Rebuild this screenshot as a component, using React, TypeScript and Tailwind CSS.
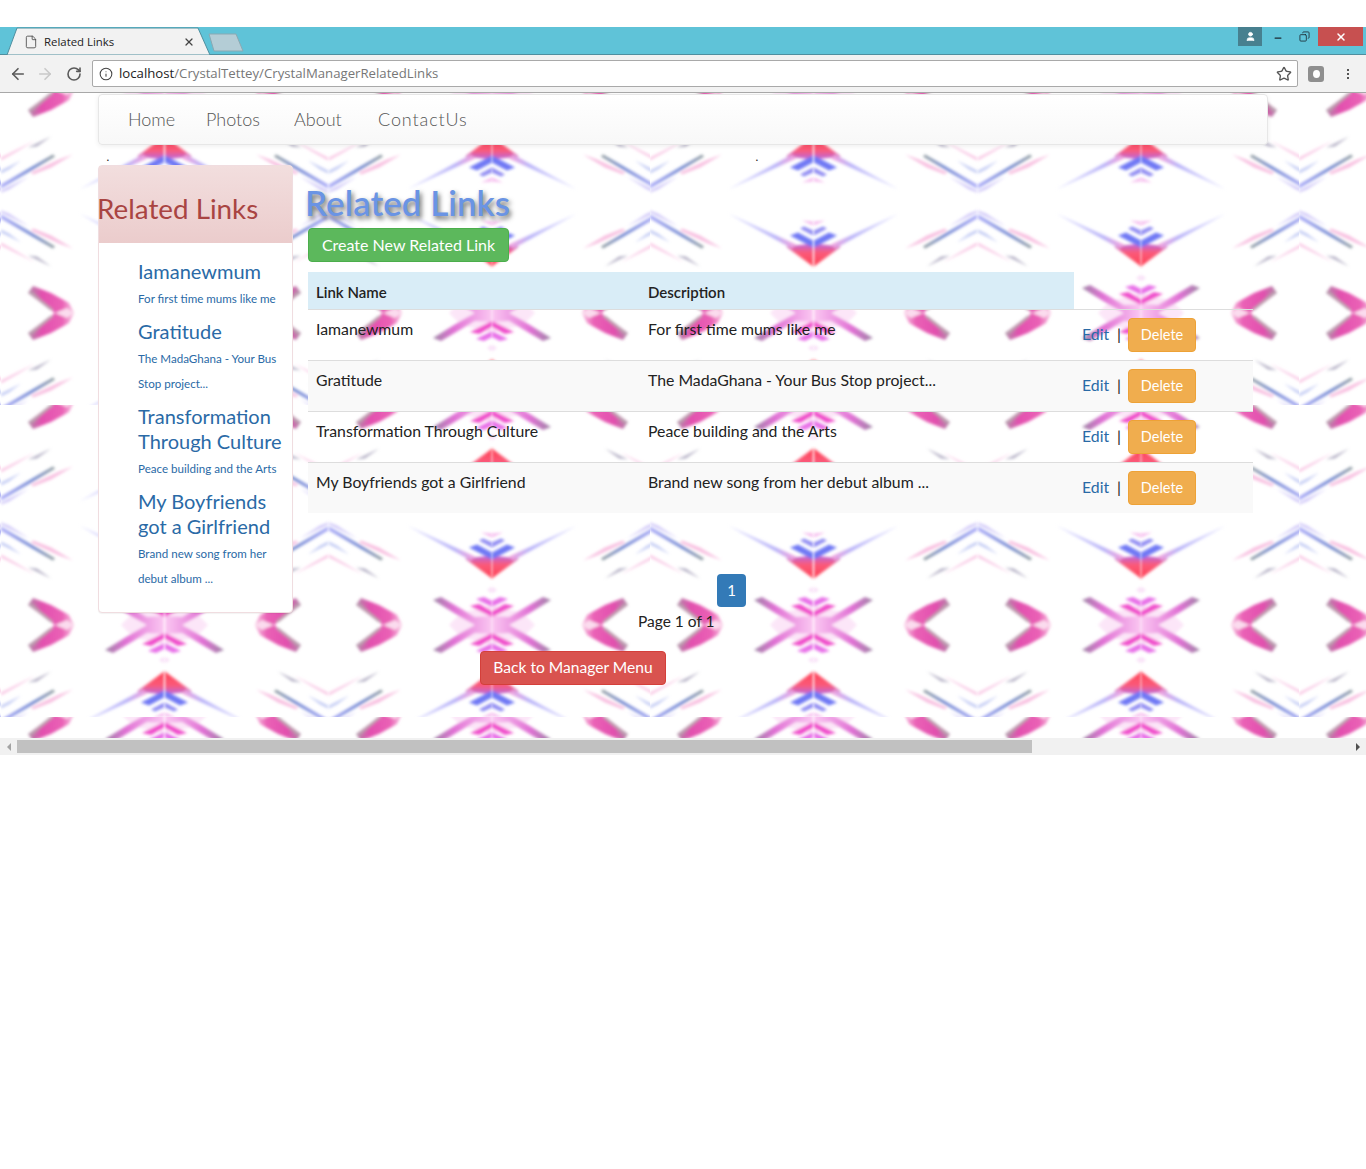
import React from "react";
import { ArrowLeft, ArrowRight, RotateCw, Info, Star, File, X, User, Minus, Copy } from "lucide-react";

const hand = "font-['Lato','Open_Sans',sans-serif] font-light";

function Background() {
  return (
    <svg className="absolute inset-0 h-full w-full" aria-hidden="true">
      <defs>
        <filter id="soft" filterUnits="userSpaceOnUse" x="-20" y="-400" width="420" height="800">
          <feGaussianBlur stdDeviation="1.5" />
        </filter>
        <linearGradient id="armX" x1="0" y1="0" x2="1" y2="0">
          <stop offset="0" stopColor="#9f86a6" />
          <stop offset="0.35" stopColor="#e070d4" />
          <stop offset="1" stopColor="#fbc8f2" />
        </linearGradient>
        <linearGradient id="blueStreak" x1="0" y1="0" x2="1" y2="0">
          <stop offset="0" stopColor="#a9a9f8" />
          <stop offset="0.6" stopColor="#6f86d0" />
          <stop offset="1" stopColor="#8f9a9c" />
        </linearGradient>
        <linearGradient id="line" x1="0" y1="0" x2="1" y2="0">
          <stop offset="0" stopColor="#d8d8ff" />
          <stop offset="0.7" stopColor="#b8b2f8" />
          <stop offset="1" stopColor="#f4a0dc" />
        </linearGradient>
        <linearGradient id="red" x1="0" y1="0" x2="0" y2="1">
          <stop offset="0" stopColor="#ff4256" />
          <stop offset="0.6" stopColor="#fb5a78" />
          <stop offset="1" stopColor="#b868e0" />
        </linearGradient>
        <linearGradient id="bulge" x1="0" y1="0" x2="1" y2="0">
          <stop offset="0" stopColor="#b08ca8" />
          <stop offset="0.3" stopColor="#e24fae" />
          <stop offset="0.75" stopColor="#ea62b6" />
          <stop offset="1" stopColor="#f8c4e2" />
        </linearGradient>
        <g id="streakUp">
          <polygon points="0,-44 34,-61 16,-50 0,-41" fill="#f9c6e4" />
          <polygon points="27,-54 50,-65 36,-55" fill="#b8b4c8" />
          <polygon points="30,-29 58,-42 72,-47 50,-34 32,-27" fill="#f8bfe0" />
          <polygon points="0,-17 52,-47 54,-45 0,-13" fill="url(#blueStreak)" />
          <polygon points="0,-11 28,-25 8,-12 0,-9" fill="#cfc6f8" />
          <polygon points="0,-31 20,-41 8,-32 0,-28" fill="#c2cbf4" />
        </g>
        <g id="diamondUp">
          <polygon points="163,-65 136,-45 163,-42" fill="url(#red)" />
          <polygon points="142,-47 78,-12 146,-43" fill="url(#line)" />
          <polygon points="163,-46 140,-34 148,-31 163,-39" fill="#6f78f4" />
          <polygon points="163,-34 150,-27 154,-25 163,-29" fill="#8f8af2" />
          <polygon points="163,-24 152,-19 163,-20" fill="#f6bcee" />
        </g>
        <g id="streaks">
          <use href="#streakUp" />
          <use href="#streakUp" transform="scale(1,-1)" />
        </g>
        <g id="diamond">
          <use href="#diamondUp" />
          <use href="#diamondUp" transform="scale(1,-1)" />
        </g>
        <g id="arrowUp">
          <polygon points="32,-27 50,-20 68,-10 73,0 54,0 27,-20" fill="url(#bulge)" />
          <polygon points="27,-21 31,-21 53,-3 49,-3" fill="#b9a2ae" />
          <polygon points="54,0 66,-5 73,0" fill="#fbdcee" />
        </g>
        <g id="xUp">
          <polygon points="163,-20 132,-12 120,0 163,0" fill="#fce6f8" />
          <polygon points="163,-9 146,-8 112,-28 104,-25 130,-9 146,0 163,0" fill="url(#armX)" />
          <polygon points="163,-8 141,-19 150,-21 163,-14" fill="#f04fcc" />
          <polygon points="163,-18 147,-26 155,-28 163,-24" fill="#e870e8" />
          <polygon points="163,-32 158,-35 163,-38" fill="#f8dcf6" />
        </g>
        <g id="rowCell">
          <use href="#arrowUp" />
          <use href="#arrowUp" transform="scale(1,-1)" />
          <use href="#xUp" />
          <use href="#xUp" transform="scale(1,-1)" />
        </g>
        <g id="half" filter="url(#soft)">
          <use href="#rowCell" y="-3" />
          <use href="#rowCell" y="220" />
          <use href="#diamond" y="108.5" />
          <use href="#diamond" y="331.5" />
          <use href="#streaks" y="108.5" />
          <use href="#streaks" y="331.5" />
        </g>
        <pattern id="tile" patternUnits="userSpaceOnUse" x="1" y="0" width="649" height="312">
          <use href="#half" />
          <use href="#half" transform="translate(327,0) scale(-1,1)" />
          <use href="#half" transform="translate(328,0)" />
          <use href="#half" transform="translate(654,0) scale(-1,1)" />
        </pattern>
      </defs>
      <rect width="100%" height="100%" fill="#ffffff" />
      <rect width="100%" height="100%" fill="url(#tile)" />
    </svg>
  );
}

function TabBar() {
  return (
    <div className="relative flex h-[28px] items-start bg-[#5fc3d8] border-b border-[#4f8f9f]">
      <svg className="absolute left-0 top-0 h-[28px] w-[250px]" aria-hidden="true">
        <polygon points="7,28 17,1 198,1 210,28" fill="#f2f2f2" stroke="#4f8f9f" strokeWidth="1" />
        <polygon points="209,7 236,7 243,24 214,24" fill="#b4cdd6" stroke="#8aa9b3" strokeWidth="1" />
      </svg>
      <div className="relative flex w-[195px] items-center pl-[24px] pt-[7px] font-['Open_Sans',sans-serif] font-normal text-[11.4px] leading-[16px] text-[#222]">
        <File size={14} strokeWidth={1.4} className="text-[#444]" />
        <span className="ml-[6px] flex-1">Related Links</span>
        <X size={12} strokeWidth={2.5} className="text-[#444]" />
      </div>
      <div className="relative ml-auto mr-[3px] flex h-[19px] items-start">
        <div className="flex h-[19px] w-[24px] items-center justify-center bg-[#47808f]">
          <User size={11} fill="#fff" className="text-white" />
        </div>
        <div className="flex h-[19px] w-[32px] items-center justify-center pt-[3px]">
          <Minus size={10} strokeWidth={3} className="text-[#1d2a33]" />
        </div>
        <div className="mr-[4px] flex h-[19px] w-[20px] items-center justify-center">
          <Copy size={11} strokeWidth={1.8} className="text-[#1d2a33] -scale-x-100" />
        </div>
        <div className="flex h-[19px] w-[45px] items-center justify-center bg-[#c75050]">
          <X size={12} strokeWidth={3} className="text-white" />
        </div>
      </div>
    </div>
  );
}

function Toolbar() {
  return (
    <div className="flex h-[38px] items-center bg-[#f2f2f2] border-b border-[#a8a8a8]">
      <ArrowLeft size={18} strokeWidth={2.2} className="ml-[9px] text-[#5a5a5a]" />
      <ArrowRight size={18} strokeWidth={2.2} className="ml-[9px] text-[#c9c9c9]" />
      <RotateCw size={16} strokeWidth={2.4} className="ml-[12px] text-[#5a5a5a]" />
      <div className="ml-[10px] flex h-[27px] w-[1206px] items-center rounded-[2px] border border-[#a9a9a9] bg-white pl-[6px] pr-[5px]">
        <Info size={14} strokeWidth={1.8} className="text-[#444]" />
        <span className="ml-[6px] flex-1 font-['Open_Sans',sans-serif] font-normal text-[13.2px] text-[#777]">
          <span className="text-[#222]">localhost</span>/CrystalTettey/CrystalManagerRelatedLinks
        </span>
        <Star size={16} strokeWidth={2} className="text-[#555]" />
      </div>
      <div className="ml-[10px] flex h-[16px] w-[16px] items-center justify-center rounded-[3px] bg-[#8f8f8f]">
        <div className="h-[8px] w-[7px] rounded-[50%] bg-white" />
      </div>
      <div className="ml-[23px] flex flex-col gap-[2px]">
        <div className="h-[2px] w-[2px] bg-[#555]" />
        <div className="h-[2px] w-[2px] bg-[#555]" />
        <div className="h-[2px] w-[2px] bg-[#555]" />
      </div>
    </div>
  );
}

const sideItems = [
  { t: ["Iamanewmum"], d: ["For first time mums like me"] },
  { t: ["Gratitude"], d: ["The MadaGhana - Your Bus", "Stop project..."] },
  { t: ["Transformation", "Through Culture"], d: ["Peace building and the Arts"] },
  { t: ["My Boyfriends", "got a Girlfriend"], d: ["Brand new song from her", "debut album ..."] },
];

const rows = [
  ["Iamanewmum", "For first time mums like me"],
  ["Gratitude", "The MadaGhana - Your Bus Stop project..."],
  ["Transformation Through Culture", "Peace building and the Arts"],
  ["My Boyfriends got a Girlfriend", "Brand new song from her debut album ..."],
];

function Sidebar() {
  return (
    <aside className="w-[195px] shrink-0 rounded-[4px] border border-[#f0dde0] bg-white shadow-[0_1px_1px_rgba(0,0,0,0.05)]">
      <div className="flex h-[77px] items-center whitespace-nowrap bg-gradient-to-b from-[#f2dede] to-[#ebcccc] pt-[8px] text-[27.8px] font-normal text-[#a94442]">
        <span className="-ml-[2px]">Related Links</span>
      </div>
      <div className="flex flex-col gap-[8px] pl-[39px] pt-[16px] pb-[21px] text-[#2a6aa6]">
        {sideItems.map((it) => (
          <div key={it.t[0]}>
            <div className="text-[20px] font-normal leading-[25px] whitespace-nowrap">
              {it.t.map((l) => (
                <div key={l}>{l}</div>
              ))}
            </div>
            <div className="mt-[2px] text-[11.6px] font-normal leading-[25px] whitespace-nowrap">
              {it.d.map((l) => (
                <div key={l}>{l}</div>
              ))}
            </div>
          </div>
        ))}
      </div>
    </aside>
  );
}

function Main() {
  return (
    <main className="ml-[15px] w-[945px]">
      <h1 className="mt-[14px] -ml-[3px] h-[49px] whitespace-nowrap text-[35px] leading-[46px] font-semibold text-[#6a94e4] [text-shadow:2px_3px_5px_#666]">
        Related Links
      </h1>
      <button className="block h-[34px] w-[201px] rounded-[4px] border border-[#4cae4c] bg-[#5cb85c] text-[16px] font-normal text-white">
        Create New Related Link
      </button>
      <table className="mt-[10px] w-[945px] table-fixed border-collapse text-[15.8px] font-normal text-[#222]">
        <colgroup>
          <col className="w-[332px]" />
          <col className="w-[434px]" />
          <col className="w-[179px]" />
        </colgroup>
        <thead>
          <tr className="h-[37px] border-b border-[#ddd]">
            <th className="bg-[#d9edf7] px-[8px] pt-[3px] text-left text-[15px] font-semibold">Link Name</th>
            <th className="bg-[#d9edf7] px-[8px] pt-[3px] text-left text-[15px] font-semibold">Description</th>
            <th />
          </tr>
        </thead>
        <tbody>
          {rows.map((r, i) => (
            <tr key={r[0]} className={`h-[51px] border-b border-[#ddd] last:border-b-0 ${i % 2 ? "bg-[#f9f9f9]" : ""}`}>
              <td className="px-[8px] pb-[11px] whitespace-nowrap">{r[0]}</td>
              <td className="px-[8px] pb-[11px] whitespace-nowrap">{r[1]}</td>
              <td className="px-[8px]">
                <div className="flex items-start whitespace-nowrap">
                  <a className="mt-[4px] text-[#2a6aa6]">Edit</a>
                  <span className="ml-[8px] mt-[4px]">|</span>
                  <button className="ml-[7px] h-[34px] w-[68px] rounded-[4px] border border-[#eea236] bg-[#f0ad4e] text-[14.5px] font-normal text-white">
                    Delete
                  </button>
                </div>
              </td>
            </tr>
          ))}
        </tbody>
      </table>
    </main>
  );
}

export default function App() {
  return (
    <div className={`min-h-[1169px] w-[1366px] overflow-hidden bg-white pt-[27px] ${hand}`}>
      <TabBar />
      <Toolbar />
      <div className="relative h-[645px] overflow-hidden">
        <Background />
        <div className="relative pl-[98px] pt-[1px]">
          <nav className="flex h-[51px] w-[1170px] items-center gap-[32px] rounded-[4px] border border-[#e7e7e7] bg-gradient-to-b from-white to-[#f8f8f8] pl-[29px] text-[18px] text-[#555] shadow-[0_1px_5px_rgba(0,0,0,0.075)]">
            <span className="w-[46px]">Home</span>
            <span className="w-[56px]">Photos</span>
            <span className="w-[52px]">About</span>
            <span className="tracking-[0.9px]">ContactUs</span>
          </nav>
          <div className="flex h-[20px] text-[16px] leading-[20px] text-[#222]">
            <span className="ml-[8px] w-[649px]">.</span>
            <span>.</span>
          </div>
          <div className="flex items-start">
            <Sidebar />
            <Main />
          </div>
          <div className="-mt-[39px] ml-[619px] flex h-[33px] w-[29px] items-center justify-center rounded-[4px] bg-[#337ab7] text-[15px] font-normal text-white">
            1
          </div>
          <div className="ml-[540px] h-[28px] text-[15.5px] font-normal leading-[28px] text-[#222]">Page 1 of 1</div>
          <button className="ml-[382px] mt-[16px] block h-[34px] w-[186px] rounded-[4px] border border-[#d43f3a] bg-[#d9534f] text-[15.6px] font-normal text-white">
            Back to Manager Menu
          </button>
        </div>
      </div>
      <div className="flex h-[17px] items-center bg-[#f1f1f1]">
        <div className="flex w-[17px] justify-center">
          <div className="h-0 w-0 border-y-[4px] border-r-[4px] border-y-transparent border-r-[#a3a3a3]" />
        </div>
        <div className="h-[13px] w-[1015px] bg-[#c1c1c1]" />
        <div className="ml-auto flex w-[17px] justify-center">
          <div className="h-0 w-0 border-y-[4px] border-l-[4px] border-y-transparent border-l-[#505050]" />
        </div>
      </div>
    </div>
  );
}
